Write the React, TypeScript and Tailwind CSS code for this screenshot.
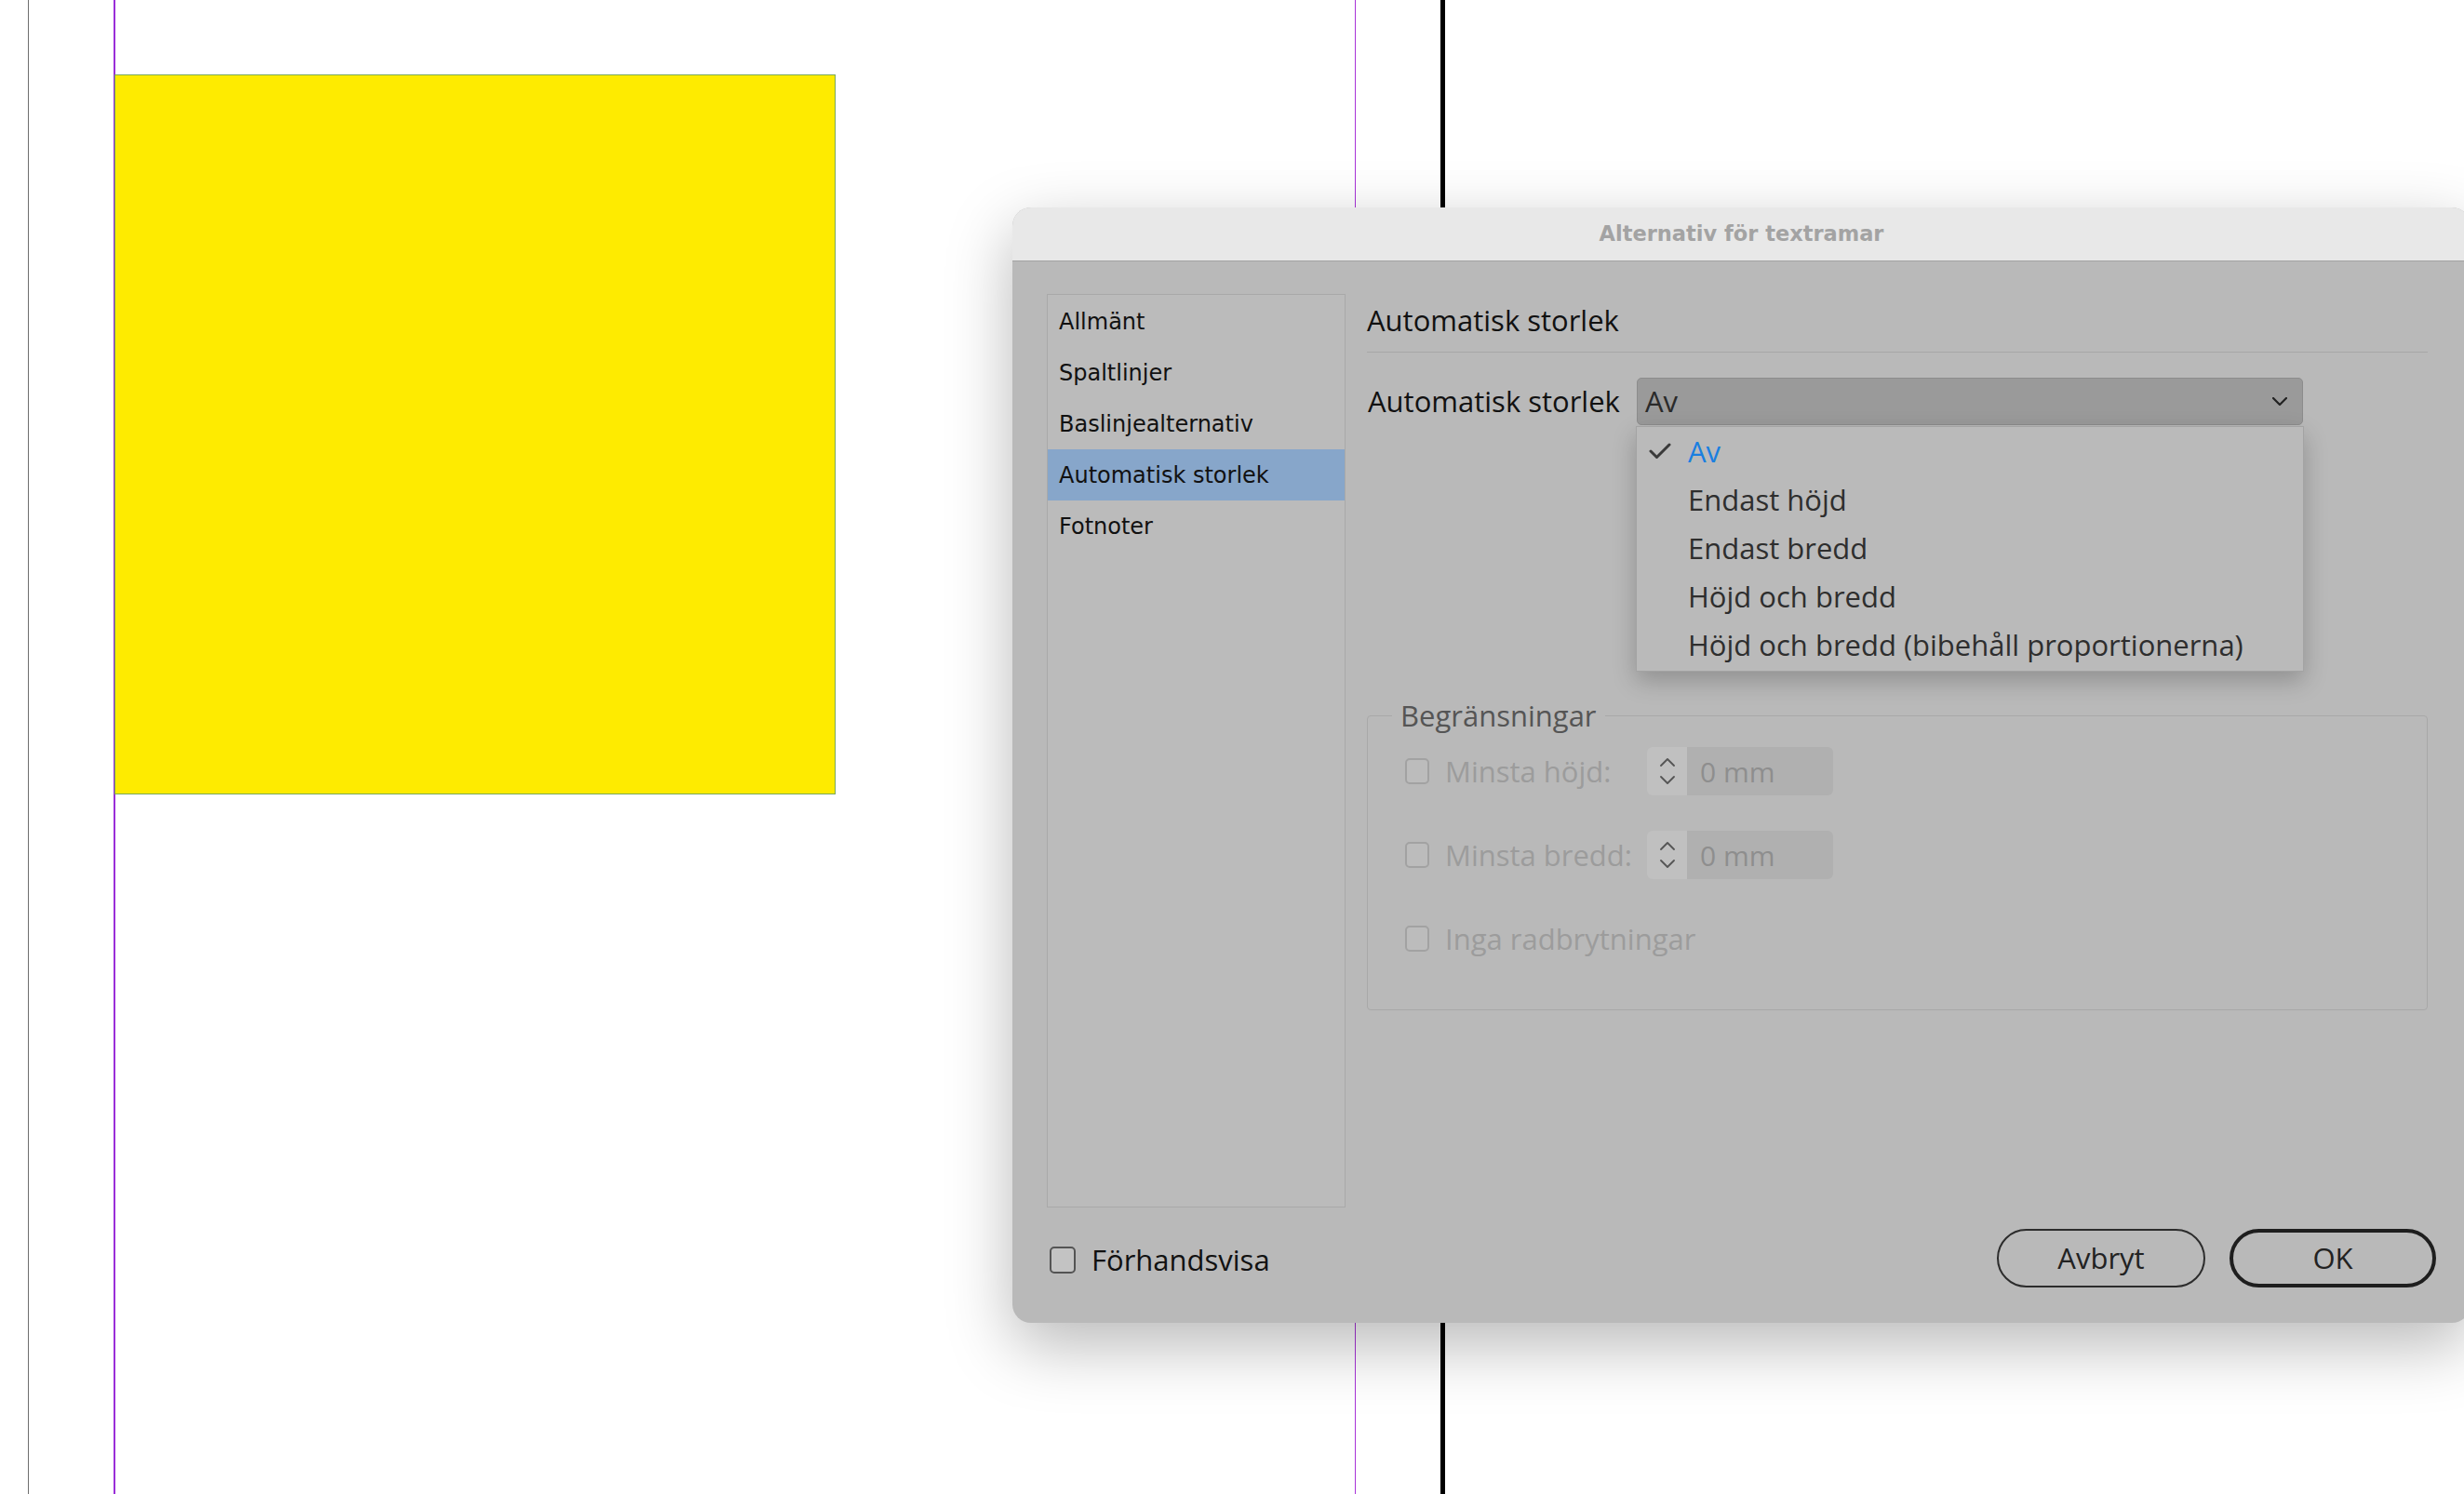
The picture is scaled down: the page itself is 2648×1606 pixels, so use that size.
import React from "react";

const MAIN = { fontFamily: '"Open Sans", "Noto Sans", sans-serif' } as const;
const SIDE = { fontFamily: '"DejaVu Sans", "Noto Sans", sans-serif' } as const;

function Chevron({ up, color = "#222", w = 16, h = 9, sw = 2 }: { up?: boolean; color?: string; w?: number; h?: number; sw?: number }) {
  return (
    <svg width={w} height={h} viewBox={`0 0 ${w} ${h}`} fill="none">
      <polyline
        points={up ? `1,${h - 1} ${w / 2},1 ${w - 1},${h - 1}` : `1,1 ${w / 2},${h - 1} ${w - 1},1`}
        stroke={color}
        strokeWidth={sw}
        strokeLinecap="round"
        strokeLinejoin="round"
      />
    </svg>
  );
}

function DisabledBox() {
  return <div className="w-[26px] h-[28px] rounded-[5px] border-2 border-[#a2a2a2] bg-[#bcbcbc] shrink-0" />;
}

function Spinner() {
  return (
    <div className="flex h-[52px]">
      <div className="w-[43px] h-full bg-[#c0c0c0] rounded-l-[6px] flex flex-col items-center justify-center gap-[10px]">
        <Chevron up color="#555" w={16} h={9} sw={1.8} />
        <Chevron color="#555" w={16} h={9} sw={1.8} />
      </div>
      <div className="w-[157px] h-full bg-[#b0b0b0] rounded-r-[6px] flex items-center pl-[14px] text-[30px] text-[#8e8e8e]" style={MAIN}>
        0 mm
      </div>
    </div>
  );
}

export default function App() {
  const side = ["Allmänt", "Spaltlinjer", "Baslinjealternativ", "Automatisk storlek", "Fotnoter"];
  const menu = ["Av", "Endast höjd", "Endast bredd", "Höjd och bredd", "Höjd och bredd (bibehåll proportionerna)"];
  return (
    <div className="relative w-[2648px] h-[1606px] bg-white overflow-hidden">
      {/* canvas */}
      <div className="absolute left-[30px] top-0 w-px h-full bg-[#6e6e6e]" />
      <div className="absolute left-[122px] top-0 w-[2px] h-full bg-[#9a2fd8]" />
      <div className="absolute left-[1456px] top-0 w-px h-full bg-[#a834d8]" />
      <div className="absolute left-[1548px] top-0 w-[5px] h-full bg-black" />
      <div className="absolute left-[123px] top-[80px] w-[775px] h-[774px] bg-[#feeb00] border border-[#7aa85a]" />

      {/* dialog */}
      <div className="absolute left-[1088px] top-[223px] w-[1567px] h-[1199px] rounded-[20px] overflow-hidden bg-[#b9b9b9] shadow-[0_24px_70px_rgba(0,0,0,0.28)] flex flex-col">
        <div className="h-[58px] shrink-0 bg-[#e8e8e8] border-b border-[#a3a3a3] flex items-center justify-center">
          <span className="text-[22.5px] font-bold text-[#a3a3a3]" style={SIDE}>Alternativ för textramar</span>
        </div>
        <div className="flex flex-col pl-[37px] pt-[35px] pr-[37px]">
          <div className="flex h-[982px]">
            <div className="w-[321px] h-full border border-[#a9a9a9] bg-[#bbbbbb] flex flex-col pt-[1px]">
              {side.map((s, i) => (
                <div
                  key={s}
                  className={`h-[55px] flex items-center pl-[12px] text-[24px] text-[#111] ${i === 3 ? "bg-[#87a6ca]" : ""}`}
                  style={SIDE}
                >
                  {s}
                </div>
              ))}
            </div>
            <div className="ml-[23px] w-[1140px] flex flex-col" style={MAIN}>
              <div className="h-[63px] border-b border-[#a7a7a7] flex items-center pb-[6px] text-[31px] text-[#111]">
                Automatisk storlek
              </div>
              <div className="mt-[27px] h-[51px] flex items-center">
                <div className="w-[290px] pl-[1px] text-[31px] text-[#111]">Automatisk storlek</div>
                <div className="relative w-[716px] h-[51px]">
                  <div className="w-full h-full bg-[#9a9a9a] border border-[#8c8c8c] rounded-[5px] flex items-center pl-[8px] pr-[16px]">
                    <span className="text-[31px] text-[#2a2a2a] flex-1">Av</span>
                    <Chevron color="#222" w={16} h={9} sw={2.2} />
                  </div>
                  <div className="absolute left-[-1px] top-[52px] w-[718px] h-[264px] bg-[#bababa] border border-[#a3a3a3] shadow-[0_10px_24px_rgba(0,0,0,0.22)] flex flex-col">
                    {menu.map((m, i) => (
                      <div key={m} className="h-[52px] flex items-center shrink-0">
                        <div className="w-[55px] pl-[13px] flex items-center">
                          {i === 0 && (
                            <svg width="24" height="18" viewBox="0 0 24 18" fill="none">
                              <polyline points="2,9 8.5,15.5 22,2" stroke="#3a3a3a" strokeWidth="3" strokeLinecap="round" strokeLinejoin="round" />
                            </svg>
                          )}
                        </div>
                        <span className={`text-[31px] ${i === 0 ? "text-[#1a7fe0]" : "text-[#2e2e2e]"}`}>{m}</span>
                      </div>
                    ))}
                  </div>
                </div>
              </div>
              <div className="mt-[312px] h-[317px] border border-[#a8a8a8] rounded-[4px]">
                <div className="-mt-[20px] ml-[26px] w-fit px-[9px] bg-[#b9b9b9] leading-[38px] text-[31px] text-[#555]">
                  Begränsningar
                </div>
                <div className="flex flex-col pl-[40px] mt-[15px]">
                  <div className="h-[52px] flex items-center">
                    <DisabledBox />
                    <span className="ml-[17px] w-[217px] text-[31px] text-[#9c9c9c]">Minsta höjd:</span>
                    <Spinner />
                  </div>
                  <div className="mt-[38px] h-[52px] flex items-center">
                    <DisabledBox />
                    <span className="ml-[17px] w-[217px] text-[31px] text-[#9c9c9c]">Minsta bredd:</span>
                    <Spinner />
                  </div>
                  <div className="mt-[38px] h-[52px] flex items-center">
                    <DisabledBox />
                    <span className="ml-[17px] text-[31px] text-[#9c9c9c]">Inga radbrytningar</span>
                  </div>
                </div>
              </div>
            </div>
          </div>
          <div className="mt-[23px] h-[63px] flex items-center" style={MAIN}>
            <div className="ml-[3px] mt-[4px] w-[28px] h-[29px] rounded-[5px] border-2 border-[#545454] bg-[#c3c3c3]" />
            <span className="ml-[17px] mt-[4px] text-[31px] text-[#111]">Förhandsvisa</span>
            <div className="ml-auto flex gap-[26px]">
              <button className="w-[224px] h-[63px] rounded-full border-2 border-[#2c2c2c] text-[31px] text-[#222] flex items-center justify-center">
                Avbryt
              </button>
              <button className="w-[222px] h-[63px] rounded-full border-[4px] border-[#1e1e1e] text-[31px] text-[#222] flex items-center justify-center">
                OK
              </button>
            </div>
          </div>
        </div>
      </div>
    </div>
  );
}
